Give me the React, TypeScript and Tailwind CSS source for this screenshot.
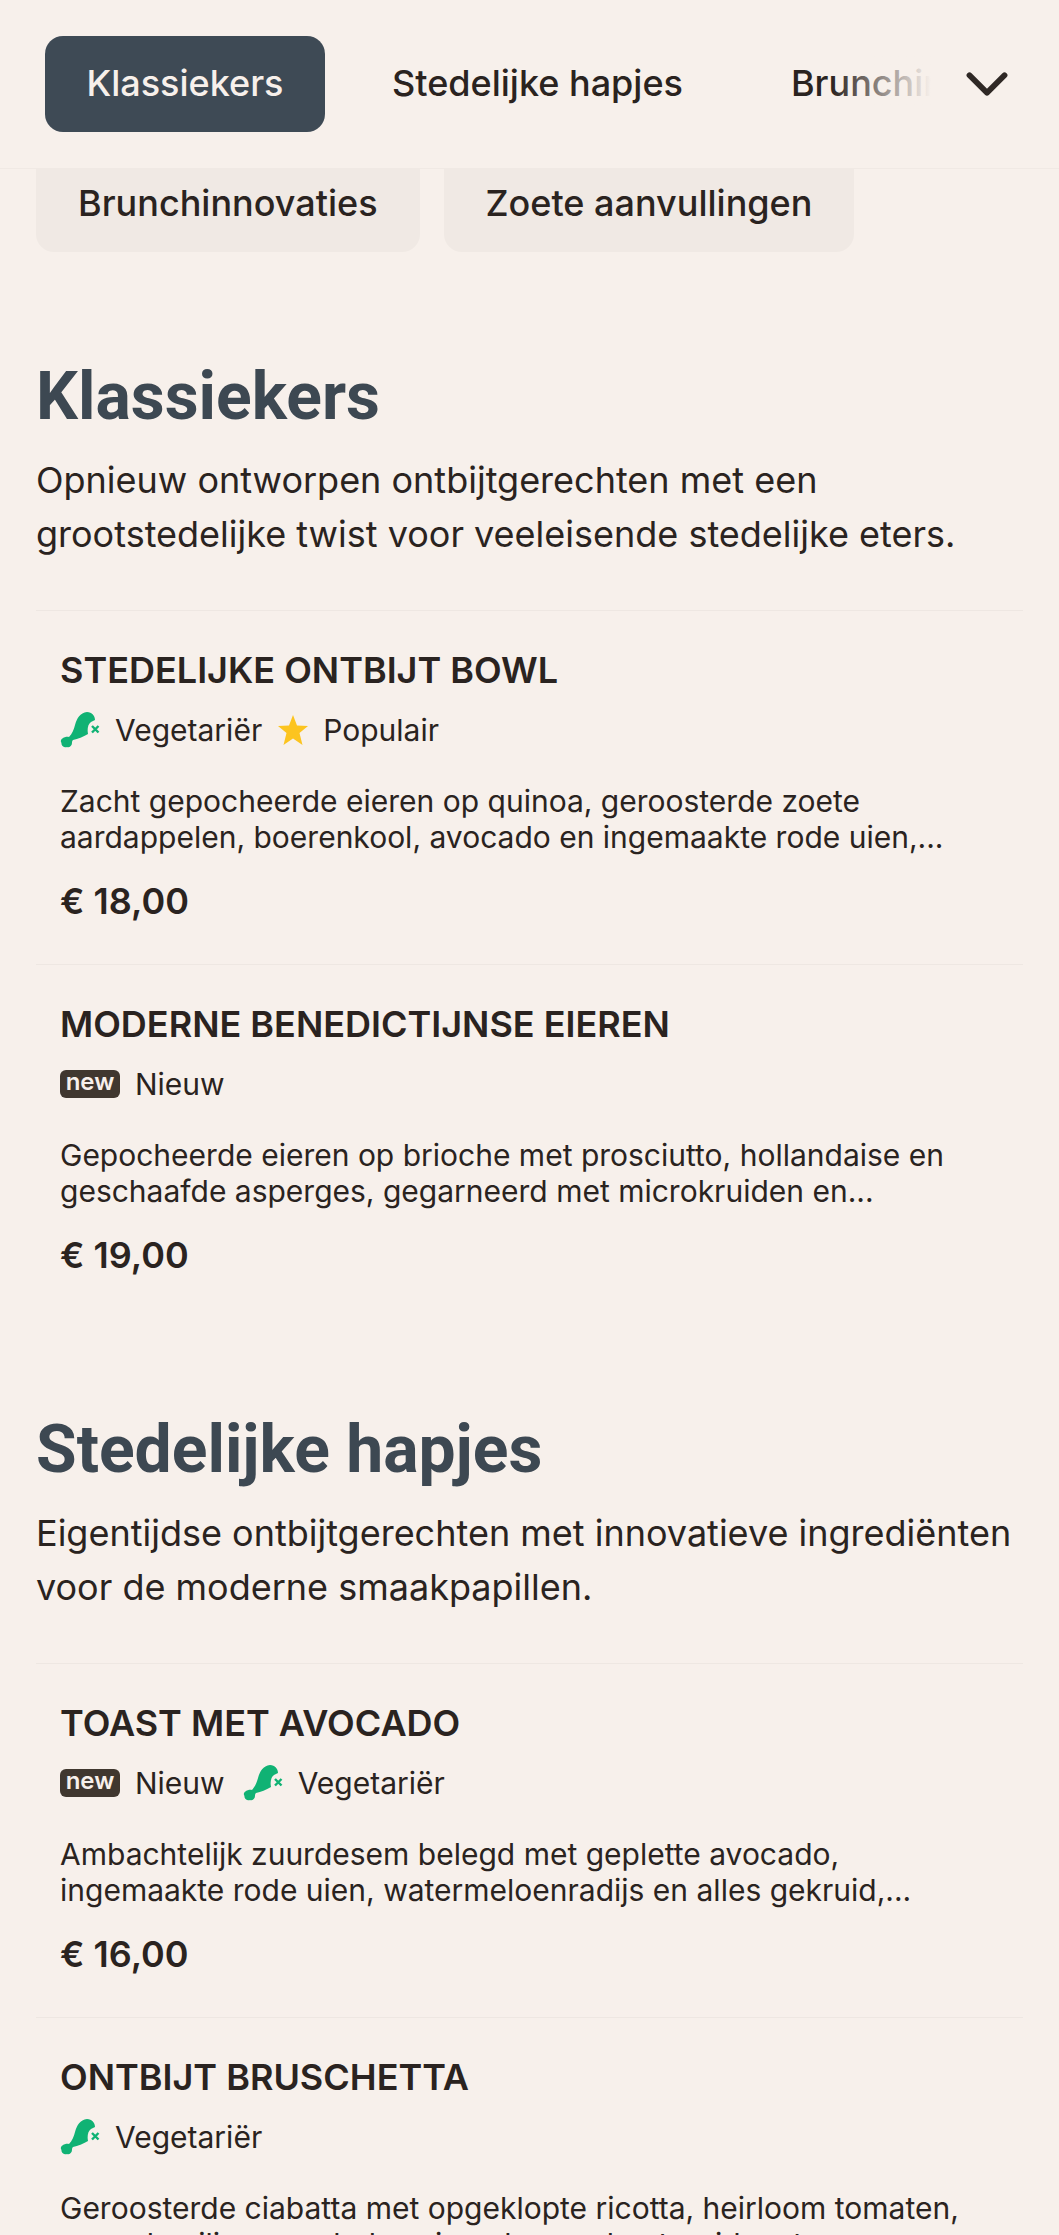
import { ChevronDown } from 'lucide-react'

type Tag = 'veg' | 'pop' | 'new'

const sections: {
    title: string
    intro: string
    items: { name: string; tags: Tag[]; desc: string; price?: string }[]
}[] = [
    {
        title: 'Klassiekers',
        intro: 'Opnieuw ontworpen ontbijtgerechten met een grootstedelijke twist voor veeleisende stedelijke eters.',
        items: [
            {
                name: 'STEDELIJKE ONTBIJT BOWL',
                tags: ['veg', 'pop'],
                desc: 'Zacht gepocheerde eieren op quinoa, geroosterde zoete aardappelen, boerenkool, avocado en ingemaakte rode uien,...',
                price: '€ 18,00',
            },
            {
                name: 'MODERNE BENEDICTIJNSE EIEREN',
                tags: ['new'],
                desc: 'Gepocheerde eieren op brioche met prosciutto, hollandaise en geschaafde asperges, gegarneerd met microkruiden en...',
                price: '€ 19,00',
            },
        ],
    },
    {
        title: 'Stedelijke hapjes',
        intro: 'Eigentijdse ontbijtgerechten met innovatieve ingrediënten voor de moderne smaakpapillen.',
        items: [
            {
                name: 'TOAST MET AVOCADO',
                tags: ['new', 'veg'],
                desc: 'Ambachtelijk zuurdesem belegd met geplette avocado, ingemaakte rode uien, watermeloenradijs en alles gekruid,...',
                price: '€ 16,00',
            },
            {
                name: 'ONTBIJT BRUSCHETTA',
                tags: ['veg'],
                desc: 'Geroosterde ciabatta met opgeklopte ricotta, heirloom tomaten, verse basilicum en balsamico glazuur, bestrooid met...',
            },
        ],
    },
]

function VegIcon() {
    return (
        <svg viewBox="0 0 41 36" className="w-[41px] h-[36px] shrink-0">
            <path
                fill="#10b274"
                d="M9 25C12 22 14 17 15 13C17 6 20 1 27 0C32 0 35 4 35 8L31 10C28 12 27 17 28 22C23 25 18 27 13 28C12 29 12 30 12 31C12 34 9 36 7 35C5 36 1 34 1.5 31C-1 28 4 24 9 25Z"
            />
            <path stroke="#10b274" strokeWidth="2.4" d="M32 14L38.5 20.5M38.5 14L32 20.5" />
        </svg>
    )
}

function StarIcon() {
    return (
        <svg viewBox="0 0 30 30" className="w-[30px] h-[30px] shrink-0 -ml-[2px]">
            <path fill="#fcc41f" d="M15 0L19 10.5L30 11L21.5 18L24.5 30L15 23.5L5.5 30L8.5 18L0 11L11 10.5Z" />
        </svg>
    )
}

function TagLabel({ tag }: { tag: Tag }) {
    if (tag === 'veg') {
        return (
            <span className="flex items-center gap-[14px]">
                <VegIcon />
                Vegetariër
            </span>
        )
    }
    if (tag === 'pop') {
        return (
            <span className="flex items-center gap-[15px]">
                <StarIcon />
                Populair
            </span>
        )
    }
    return (
        <span className="flex items-center gap-[15px]">
            <span className="flex items-center justify-center w-[60px] h-[28px] rounded-[6px] bg-[#40372f] text-[#f7f0eb] text-[24px] font-semibold leading-none pb-[4px]">
                new
            </span>
            Nieuw
        </span>
    )
}

export default function App() {
    return (
        <div className="h-[2235px] overflow-hidden bg-[#f7f0eb] text-[#2a2320] font-['Inter',sans-serif]">
            <header className="h-[169px] border-b border-[#f0e9e4] flex items-center pl-[45px] pr-[37px] relative">
                <button className="h-[96px] w-[280px] shrink-0 rounded-[18px] bg-[#3e4a55] text-[#f7f0eb] text-[36px] font-medium pb-[2px]">
                    Klassiekers
                </button>
                <span className="ml-[67px] text-[36px] font-medium whitespace-nowrap pb-[2px]">Stedelijke hapjes</span>
                <div className="ml-[108px] w-[140px] overflow-hidden relative pb-[2px]">
                    <span className="text-[36px] font-medium whitespace-nowrap">Brunchinnovaties</span>
                    <div className="absolute inset-y-0 right-0 w-[100px] bg-gradient-to-r from-transparent to-[#f7f0eb]" />
                </div>
                <ChevronDown className="ml-auto mb-[1px] w-[70px] h-[70px] text-[#2f2825]" strokeWidth={2} />
            </header>

            <div className="flex gap-[24px] px-[36px]">
                {['Brunchinnovaties', 'Zoete aanvullingen'].map((label) => (
                    <div
                        key={label}
                        className="h-[83px] px-[42px] pb-[16px] flex items-center rounded-b-[18px] bg-[#f0e9e4] text-[36px] font-medium whitespace-nowrap"
                    >
                        {label}
                    </div>
                ))}
            </div>

            <main className="px-[36px]">
                {sections.map((section) => (
                    <section key={section.title} className="pt-[109px] last:pt-[96px]">
                        <h2 className="text-[66px] leading-[72px] font-bold font-['Roboto',sans-serif] text-[#3d4852]">{section.title}</h2>
                        <p className="mt-[20px] text-[36px] leading-[54px]">{section.intro}</p>
                        <div className="mt-[49px]">
                            {section.items.map((item) => (
                                <article key={item.name} className="h-[354px] border-t border-[#eee7e2] px-[24px] pt-[37px]">
                                    <h3 className="text-[36px] leading-[44px] font-semibold">{item.name}</h3>
                                    <div className="mt-[20px] h-[36px] flex items-center gap-[18px] text-[30px] leading-[36px]">
                                        {item.tags.map((tag) => (
                                            <TagLabel key={tag} tag={tag} />
                                        ))}
                                    </div>
                                    <p className="mt-[35px] text-[30px] leading-[36px]">{item.desc}</p>
                                    {item.price && (
                                        <p className="mt-[24px] text-[36px] leading-[44px] font-semibold">{item.price}</p>
                                    )}
                                </article>
                            ))}
                        </div>
                    </section>
                ))}
            </main>
        </div>
    )
}
